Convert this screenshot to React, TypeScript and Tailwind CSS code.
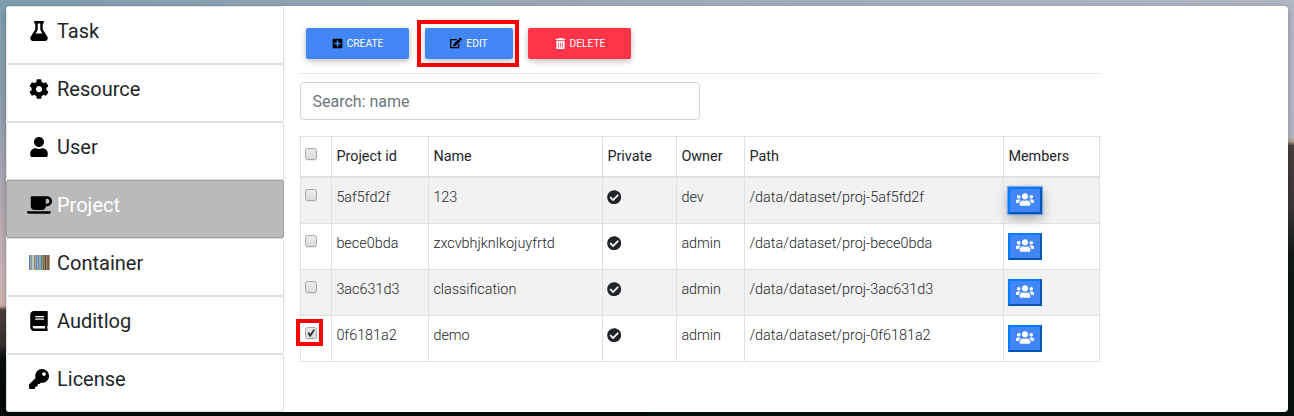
import React from 'react';
import { FaCog, FaUser, FaCoffee, FaBook, FaKey, FaPlusSquare, FaEdit, FaTrashAlt, FaCheckCircle, FaUsers } from 'react-icons/fa';
import { FaFlask } from 'react-icons/fa6';

const bars = ['#5b7bb0', '#b9a184', '#6f9cc4', '#a8d0d8', '#c9d0a0', '#7487ad', '#c9a26b', '#5a88c0', '#8fb6d0', '#5f8fc8', '#c89a70', '#6fb0d8', '#7e7a72', '#a68c55', '#5a7a80', '#9a7a5a', '#504038', '#c5844c', '#5a6a80', '#7a6048', '#b59d78'];

function Barcode() {
  return (
    <svg width="21" height="15" viewBox="0 0 21 15" shapeRendering="crispEdges">
      {bars.map((color, i) => (
        <rect key={i} x={i} y="0" width="1" height="15" fill={color} />
      ))}
    </svg>
  );
}

const menu = [
  { label: 'Task', icon: <FaFlask size={20} className="mr-px" /> },
  { label: 'Resource', icon: <FaCog size={20} className="mr-px" /> },
  { label: 'User', icon: <FaUser size={20} className="mr-px" /> },
  { label: 'Project', icon: <FaCoffee className="h-5 w-[25px]" />, active: true },
  { label: 'Container', icon: <Barcode /> },
  { label: 'Auditlog', icon: <FaBook size={20} className="mr-px" /> },
  { label: 'License', icon: <FaKey size={20} className="mr-px" /> },
];

const rows = [
  { id: '5af5fd2f', name: '123', owner: 'dev', focused: true },
  { id: 'bece0bda', name: 'zxcvbhjknlkojuyfrtd', owner: 'admin' },
  { id: '3ac631d3', name: 'classification', owner: 'admin' },
  { id: '0f6181a2', name: 'demo', owner: 'admin', checked: true },
];

function Check({ checked = false }: { checked?: boolean }) {
  return (
    <span className="block h-3 w-3 rounded-[2.5px] border border-[#a9a9a9] bg-gradient-to-b from-[#ebebeb] to-[#dcdcdc] shadow-[0_1px_0_rgba(0,0,0,0.08)]">
      {checked && (
        <svg width="10" height="10" viewBox="0 0 10 10" className="block">
          <path d="M1.5 5.2 3.1 4.1 4.3 5.7 7.6 1 9 2 4.8 8.8H3.6Z" fill="#3b3b3b" />
        </svg>
      )}
    </span>
  );
}

const buttonBase = 'flex h-[31px] items-center justify-center gap-1 rounded-[2px] text-[10.24px] leading-none text-white shadow-[0_2px_5px_0_rgba(0,0,0,0.16),0_2px_10px_0_rgba(0,0,0,0.12)]';
const cell = 'border border-[#dee2e6] pl-1 align-top';
const textCell = 'border border-[#dee2e6] pt-[9px] pl-[4.4px] align-top';

export default function App() {
  return (
    <div className="h-[416px] w-[1294px] overflow-hidden bg-[linear-gradient(90deg,#7f9fae_0%,#8ea2b3_20%,#a0abbc_50%,#b3b8c6_100%),linear-gradient(180deg,#7f9fae_0%,#8f9fb0_25%,#a9a7b4_40%,#b9adb5_52%,#c9b5b8_66%,#cdb3ae_73.5%,#4b403e_74.5%,#38302e_83%,#07100f_86%,#040b0b_100%),linear-gradient(180deg,#b3b8c6_0%,#b5b8c4_33%,#b9a08e_34%,#4a4040_35%,#3d3638_50%,#101a19_62%,#07110f_100%)] bg-[size:100%_12px,50%_100%,50%_100%] bg-[position:top,left,right] bg-no-repeat p-1.5 font-['Roboto',sans-serif] text-[#212529]">
      <div className="flex h-[406px] w-[1282px] overflow-hidden rounded bg-white shadow-[0_2px_5px_rgba(0,0,0,0.16),0_2px_10px_rgba(0,0,0,0.12)]">
        <nav className="w-[278px] shrink-0">
          {menu.map((item) => (
            <div
              key={item.label}
              className={
                item.active
                  ? 'flex h-[58px] rounded-[2px] border border-[#a0a0a0] bg-[#bababa] pt-[10px] pl-5 text-white'
                  : 'flex h-[58px] rounded-[2px] border border-[#dfdfdf] bg-white pt-[10px] pl-5'
              }
            >
              <span className="flex h-7 w-[25px] items-center justify-center pb-px text-black">{item.icon}</span>
              <span className="ml-[5px] text-xl leading-7">{item.label}</span>
            </div>
          ))}
        </nav>
        <main className="ml-4 w-[800px] pt-[14px]">
          <div className="flex h-[54px] items-start border-b border-[#e8e8e8]">
            <button className={`${buttonBase} mt-2 ml-1.5 w-[103px] bg-[#4285f4]`}>
              <FaPlusSquare size={11} className="text-black" />
              <span className="pt-px">CREATE</span>
            </button>
            <div className="ml-2 border-4 border-[#ff0000] py-1 pr-0.5 pl-1">
              <button className={`${buttonBase} w-[88px] bg-[#4285f4]`}>
                <FaEdit size={12} className="mb-px text-black" />
                <span className="pt-px">EDIT</span>
              </button>
            </div>
            <button className={`${buttonBase} mt-2 ml-[9px] w-[103px] bg-[#ff3547] pl-px`}>
              <FaTrashAlt size={11} />
              <span className="pt-px">DELETE</span>
            </button>
          </div>
          <input
            placeholder="Search: name"
            className="mt-2 block h-[38px] w-[400px] rounded border border-[#ced4da] px-[11.5px] text-base text-[#495057] placeholder:text-[#6c757d]"
          />
          <table className="mt-4 w-[800px] table-fixed border-collapse text-[14.4px] leading-[22px]">
            <colgroup>
              <col className="w-[31px]" />
              <col className="w-[97px]" />
              <col className="w-[174px]" />
              <col className="w-[74px]" />
              <col className="w-[68px]" />
              <col className="w-[259px]" />
              <col className="w-[96px]" />
            </colgroup>
            <thead>
              <tr className="h-[40px] border-b-2 border-[#dee2e6] text-left">
                <th className={`${cell} pt-[11px]`}><Check /></th>
                {['Project id', 'Name', 'Private', 'Owner', 'Path', 'Members'].map((title) => (
                  <th key={title} className={`${textCell} font-normal`}>{title}</th>
                ))}
              </tr>
            </thead>
            <tbody>
              {rows.map((row) => (
                <tr key={row.id} className="h-[46px] font-light first:h-[47px] odd:bg-[#f2f2f2]">
                  <td className={`${cell} pt-[11px]`}>
                    {row.checked ? (
                      <div className="relative">
                        <Check checked />
                        <div className="absolute -top-[8px] -left-[9px] h-[27px] w-[27px] border-4 border-[#ff0000]" />
                      </div>
                    ) : (
                      <Check />
                    )}
                  </td>
                  <td className={textCell}>{row.id}</td>
                  <td className={textCell}>{row.name}</td>
                  <td className={`${cell} pt-3`}><FaCheckCircle size={14.4} /></td>
                  <td className={textCell}>{row.owner}</td>
                  <td className={textCell}>/data/dataset/proj-{row.id}</td>
                  <td className={`${cell} pt-[9px]`}>
                    <button
                      className={
                        row.focused
                          ? 'flex h-[27px] w-[34px] items-center justify-center border-2 border-t-[#007bff] border-r-[#0056b3] border-b-[#0056b3] border-l-[#007bff] bg-[#4285f4] pb-0.5 text-white shadow-[0_0_1px_1px_rgba(66,133,244,0.6),0_5px_11px_0_rgba(0,0,0,0.18),0_4px_15px_0_rgba(0,0,0,0.15)]'
                          : 'flex h-[27px] w-[34px] items-center justify-center border-2 border-t-[#007bff] border-r-[#0056b3] border-b-[#0056b3] border-l-[#007bff] bg-[#4285f4] pb-0.5 text-white'
                      }
                    >
                      <FaUsers className="h-[15px] w-[18px]" />
                    </button>
                  </td>
                </tr>
              ))}
            </tbody>
          </table>
        </main>
      </div>
    </div>
  );
}
